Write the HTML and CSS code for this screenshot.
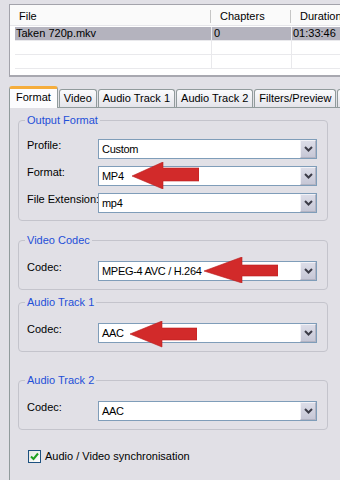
FILE: index.html
```html
<!DOCTYPE html>
<html lang="en">
<head>
    <meta charset="UTF-8">
    <meta name="viewport" content="width=device-width, initial-scale=1.0">
    <title>Format</title>
    <link rel="stylesheet" href="styles.css">
</head>
<body>
    <div class="file-list">
        <div class="list-head">
            <div class="head-cell col-file">File</div>
            <span class="head-sep"></span>
            <div class="head-cell col-chapters">Chapters</div>
            <span class="head-sep"></span>
            <div class="head-cell col-duration">Duration</div>
        </div>
        <div class="list-row selected">
            <div class="cell col-file">Taken 720p.mkv</div>
            <div class="cell col-chapters">0</div>
            <div class="cell col-duration">01:33:46</div>
        </div>
        <div class="list-row">
            <div class="cell col-file"></div>
            <div class="cell col-chapters"></div>
            <div class="cell col-duration"></div>
        </div>
        <div class="list-row">
            <div class="cell col-file"></div>
            <div class="cell col-chapters"></div>
            <div class="cell col-duration"></div>
        </div>
    </div>

    <div class="tabs">
        <div class="tab active">Format</div>
        <div class="tab">Video</div>
        <div class="tab">Audio Track 1</div>
        <div class="tab">Audio Track 2</div>
        <div class="tab">Filters/Preview</div>
        <div class="tab">Subtitles</div>
    </div>

    <div class="tab-panel">
        <fieldset class="group group-output">
            <legend>Output Format</legend>
            <div class="field">
                <label>Profile:</label>
                <div class="combo">
                    <span class="combo-text">Custom</span>
                    <span class="drop"><svg width="9" height="6" viewBox="0 0 9 6"><path d="M1 1 L4.5 4.5 L8 1" fill="none" stroke="#3c3c48" stroke-width="2"/></svg></span>
                </div>
            </div>
            <div class="field">
                <label>Format:</label>
                <div class="combo">
                    <span class="combo-text">MP4</span>
                    <span class="drop"><svg width="9" height="6" viewBox="0 0 9 6"><path d="M1 1 L4.5 4.5 L8 1" fill="none" stroke="#3c3c48" stroke-width="2"/></svg></span>
                    <svg class="arrow arrow-format" width="67" height="27" viewBox="0 0 67 27"><polygon points="0,14 31,0 31,6 67,6 67,19 31,19 31,27"/></svg>
                </div>
            </div>
            <div class="field">
                <label>File Extension:</label>
                <div class="combo">
                    <span class="combo-text">mp4</span>
                    <span class="drop"><svg width="9" height="6" viewBox="0 0 9 6"><path d="M1 1 L4.5 4.5 L8 1" fill="none" stroke="#3c3c48" stroke-width="2"/></svg></span>
                </div>
            </div>
        </fieldset>

        <fieldset class="group group-video">
            <legend>Video Codec</legend>
            <div class="field">
                <label>Codec:</label>
                <div class="combo">
                    <span class="combo-text">MPEG-4 AVC / H.264</span>
                    <span class="drop"><svg width="9" height="6" viewBox="0 0 9 6"><path d="M1 1 L4.5 4.5 L8 1" fill="none" stroke="#3c3c48" stroke-width="2"/></svg></span>
                    <svg class="arrow arrow-video" width="74" height="26" viewBox="0 0 74 26"><polygon points="0,14 38,0 38,8 74,8 74,19 38,19 38,26"/></svg>
                </div>
            </div>
        </fieldset>

        <fieldset class="group group-audio1">
            <legend>Audio Track 1</legend>
            <div class="field">
                <label>Codec:</label>
                <div class="combo">
                    <span class="combo-text">AAC</span>
                    <span class="drop"><svg width="9" height="6" viewBox="0 0 9 6"><path d="M1 1 L4.5 4.5 L8 1" fill="none" stroke="#3c3c48" stroke-width="2"/></svg></span>
                    <svg class="arrow arrow-audio" width="67" height="27" viewBox="0 0 67 27"><polygon points="0,13 32,0 32,7 67,7 67,19 32,19 32,26"/></svg>
                </div>
            </div>
        </fieldset>

        <fieldset class="group group-audio2">
            <legend>Audio Track 2</legend>
            <div class="field">
                <label>Codec:</label>
                <div class="combo">
                    <span class="combo-text">AAC</span>
                    <span class="drop"><svg width="9" height="6" viewBox="0 0 9 6"><path d="M1 1 L4.5 4.5 L8 1" fill="none" stroke="#3c3c48" stroke-width="2"/></svg></span>
                </div>
            </div>
        </fieldset>

        <div class="check-row">
            <span class="checkbox"><svg width="9" height="9" viewBox="0 0 9 9"><path d="M1 4.5 L3.5 7 L8 1.5" fill="none" stroke="#21a121" stroke-width="2"/></svg></span>
            <span>Audio / Video synchronisation</span>
        </div>
    </div>
</body>
</html>
```

FILE: styles.css
```css
body {
    margin: 0;
    width: 340px;
    height: 480px;
    overflow: hidden;
    background-color: #e1e0e6;
    font-family: "Liberation Sans", Arial, sans-serif;
    font-size: 11px;
    color: #000;
}

/* File list */
.file-list {
    margin: 4px 0 0 9px;
    width: 360px;
    height: 70px;
    background-color: #fff;
    border: 1px solid #a3a3ab;
    border-bottom: 2px solid #a8a8b0;
}
.list-head {
    display: flex;
    align-items: flex-end;
    height: 20px;
    background-color: #fafafa;
    border-bottom: 1px solid #e6e6ea;
}
.head-cell {
    line-height: 16px;
    padding-bottom: 1px;
}
.head-cell.col-file {
    width: 191px;
    padding-left: 9px;
}
.head-cell.col-chapters {
    width: 70px;
    padding-left: 9px;
}
.head-cell.col-duration {
    padding-left: 9px;
}
.head-sep {
    width: 1px;
    height: 13px;
    margin-bottom: 2px;
    background-color: #c6c6c6;
}
.list-row {
    display: flex;
    height: 13px;
    margin-left: 5px;
    border-bottom: 1px solid #e9e9ec;
    line-height: 13px;
}
.list-head + .list-row {
    margin-top: 1px;
}
.list-row.selected {
    background-color: #b4b3be;
}
.cell {
    border-right: 1px solid #e9e9ec;
}
.cell.col-file {
    width: 195px;
    padding-left: 1px;
}
.cell.col-chapters {
    width: 77px;
    padding-left: 2px;
}
.cell.col-duration {
    padding-left: 1px;
    border-right: none;
}

/* Tabs */
.tabs {
    display: flex;
    align-items: flex-end;
    gap: 1px;
    height: 21px;
    margin: 9px 0 0 9px;
}
.tab {
    height: 17px;
    line-height: 17px;
    padding: 0 4px;
    white-space: nowrap;
    border: 1px solid #919b9c;
    border-bottom: none;
    border-radius: 3px 3px 0 0;
    background: linear-gradient(#fbfbfd, #e4e4ea);
}
.tab.active {
    height: 19px;
    line-height: 17px;
    padding: 0 6px;
    margin-bottom: -1px;
    position: relative;
    z-index: 1;
    border-top: 3px solid #f5ad3c;
    background: #fcfcfe;
}

/* Panel */
.tab-panel {
    width: 340px;
    height: 380px;
    margin-left: 9px;
    padding: 6px 0 0 8px;
    border-left: 1px solid #919b9c;
    border-top: 1px solid #919b9c;
    box-sizing: border-box;
}
.group {
    width: 310px;
    box-sizing: border-box;
    margin: 0;
    padding: 14px 9px 8px 8px;
    border: 1px solid #c4c4cc;
    border-radius: 4px;
}
.group legend {
    padding: 0 2px;
    margin-left: -2px;
    line-height: 13px;
    color: #1f4fd8;
}
.group-output {
    padding-top: 12px;
    padding-bottom: 7px;
}
.group-video {
    margin-top: 13px;
}
.group-audio1 {
    margin-top: 6px;
}
.group-audio2 {
    margin-top: 22px;
}
.field {
    display: flex;
    margin-bottom: 7px;
}
.field:last-child {
    margin-bottom: 0;
}
.field label {
    width: 71px;
    line-height: 13px;
    white-space: nowrap;
}
.combo {
    position: relative;
    display: flex;
    align-items: center;
    width: 219px;
    height: 20px;
    box-sizing: border-box;
    background-color: #fff;
    border: 1px solid #7f9db9;
}
.combo-text {
    flex: 1;
    padding-left: 3px;
    padding-top: 1px;
    line-height: 13px;
    letter-spacing: -0.3px;
}
.drop {
    display: flex;
    justify-content: center;
    align-items: center;
    width: 16px;
    height: 18px;
    box-sizing: border-box;
    background: linear-gradient(#dcdde8, #c6c7d6);
    border: 1px solid #f2f2f7;
    border-right-color: #b2b3c2;
    border-bottom-color: #b2b3c2;
}
.arrow {
    position: absolute;
    fill: #d22a2a;
    stroke: #b81f1f;
    stroke-width: 0.6;
}
.arrow-format {
    left: 33px;
    top: -5px;
}
.arrow-video {
    left: 105px;
    top: -5px;
}
.arrow-audio {
    left: 31px;
    top: -3px;
}

/* Checkbox */
.check-row {
    display: flex;
    align-items: center;
    gap: 4px;
    margin: 20px 0 0 10px;
    line-height: 13px;
}
.checkbox {
    display: flex;
    justify-content: center;
    align-items: center;
    width: 13px;
    height: 13px;
    box-sizing: border-box;
    border: 1px solid #1c5180;
    background: linear-gradient(135deg, #e6e6e0, #fff);
}
```
